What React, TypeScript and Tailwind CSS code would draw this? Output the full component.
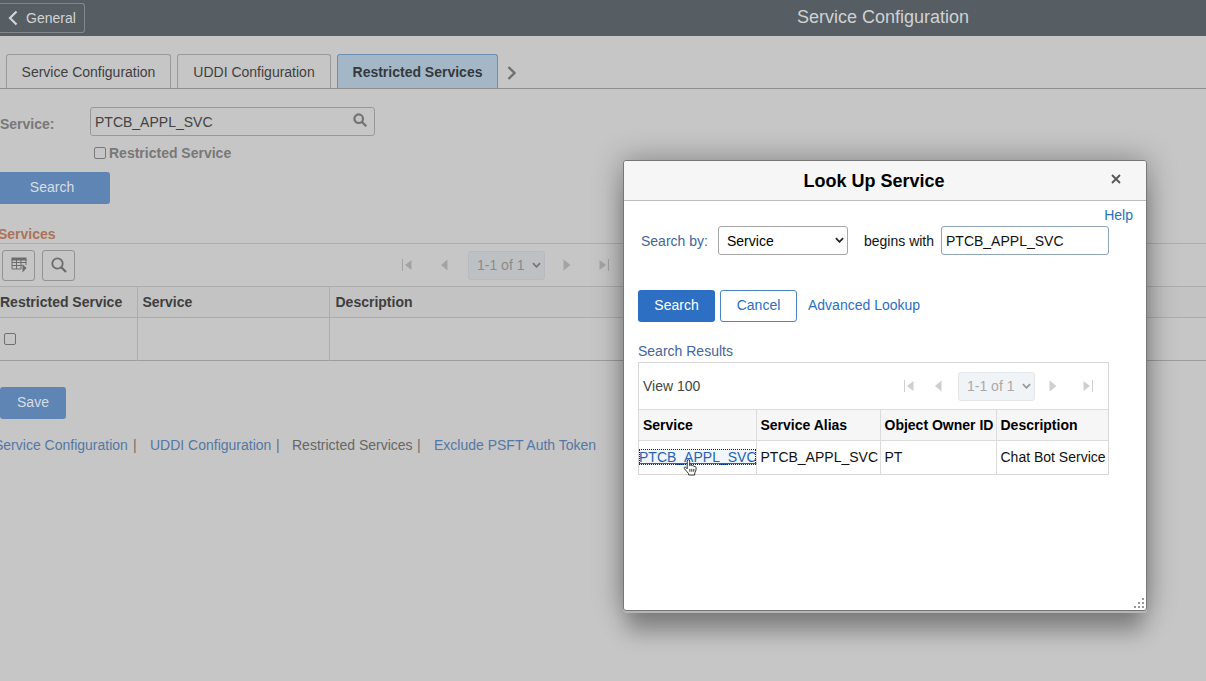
import React from "react";

type Tone = "dim" | "bright";

const Chevron = ({ className }: { className: string }) => (
  <svg viewBox="0 0 10 6" className={className} fill="none" stroke="currentColor" strokeWidth="2" aria-hidden="true">
    <path d="M1 1l4 4 4-4" />
  </svg>
);

function Pager({ tone, id }: { tone: Tone; id: string }) {
  const dim = tone === "dim";
  return (
    <div className={dim ? "flex items-center text-[#a3a3a3]" : "flex items-center text-[#cfcfcf]"}>
      <button type="button" aria-label="First page" className="flex">
        <svg viewBox="0 0 10 12" className="h-3 w-2.5" fill="currentColor">
          <path d="M0 0h1v12H0zM9.500 1v10L3 6z" />
        </svg>
      </button>
      <button type="button" aria-label="Previous page" className={dim ? "ml-7 flex" : "ml-5 flex"}>
        <svg viewBox="0 0 8 12" className="h-3 w-2" fill="currentColor">
          <path d="M7.500 .5v11L1 6z" />
        </svg>
      </button>
      <div className={dim ? "relative ml-5" : "relative ml-4"}>
        <select
          id={id}
          aria-label="Rows shown"
          className={
            dim
              ? "block h-[29px] w-[77px] appearance-none rounded-[3px] border border-[#b7bbbf] bg-[#bec1c3] pl-2 text-sm text-[#8b8b8b]"
              : "block h-[29px] w-[77px] appearance-none rounded-[3px] border border-[#e3e7ea] bg-[#f1f4f7] pl-2 text-sm text-[#a9a9a9]"
          }
        >
          <option>1-1 of 1</option>
        </select>
        <Chevron
          className={
            dim
              ? "pointer-events-none absolute top-[11px] right-1 h-[6px] w-[9px] text-[#777]"
              : "pointer-events-none absolute top-[11px] right-1 h-[6px] w-[9px] text-[#999]"
          }
        />
      </div>
      <button type="button" aria-label="Next page" className={dim ? "ml-[18px] flex" : "ml-[14px] flex"}>
        <svg viewBox="0 0 8 12" className="h-3 w-2" fill="currentColor">
          <path d="M.5 .5v11L7.500 6z" />
        </svg>
      </button>
      <button type="button" aria-label="Last page" className={dim ? "ml-7 flex" : "ml-[26px] flex"}>
        <svg viewBox="0 0 10 12" className="h-3 w-2.5" fill="currentColor">
          <path d="M9 0h1v12H9zM.5 1v10L7 6z" />
        </svg>
      </button>
    </div>
  );
}

function Page() {
  return (
    <div>
      <header className="relative flex h-9 items-start bg-[#565d63]">
        <button
          type="button"
          className="mt-[3px] flex h-[30px] w-[85px] items-center gap-2 rounded-r-[3px] border border-l-0 border-[#84888c] pl-2 text-sm text-[#d3d5d6]"
        >
          <svg viewBox="0 0 10 16" className="h-4 w-2.5" fill="none" stroke="currentColor" strokeWidth="2.200">
            <path d="M8.500 1.500L2 8l6.500 6.500" />
          </svg>
          General
        </button>
        <h1 className="absolute left-[797px] top-1 text-lg leading-[26px] text-[#d0d2d3]">Service Configuration</h1>
      </header>

      <nav className="flex h-[53px] items-end border-b border-[#8f8f8f] pl-1.5 text-sm text-[#3f3f3f]">
        <button type="button" className="h-[34px] w-[165px] rounded-t-[3px] border border-b-0 border-[#999]">
          Service Configuration
        </button>
        <button type="button" className="ml-1.5 h-[34px] w-[154px] rounded-t-[3px] border border-b-0 border-[#999]">
          UDDI Configuration
        </button>
        <button
          type="button"
          className="ml-1.5 h-[34px] w-[161px] rounded-t-[3px] border border-b-0 border-[#6c8fb5] bg-[#a4b7c6] font-bold text-[#35393c]"
        >
          Restricted Services
        </button>
        <button type="button" aria-label="More tabs" className="mb-2 ml-[9px] text-[#707070]">
          <svg viewBox="0 0 10 14" className="h-3.5 w-2.5" fill="none" stroke="currentColor" strokeWidth="2.400">
            <path d="M1.500 1l6 6-6 6" />
          </svg>
        </button>
      </nav>

      <main className="-ml-1.5 text-sm">
        <div className="flex pt-[18px] pl-1.5">
          <label htmlFor="service" className="w-[90px] pt-2 leading-[18px] font-bold text-[#787878]">
            Service:
          </label>
          <div className="relative">
            <input
              id="service"
              defaultValue="PTCB_APPL_SVC"
              className="block h-[29px] w-[285px] rounded-[3px] border border-[#989898] pl-1 text-[#424242] outline-none"
            />
            <svg
              viewBox="0 0 14 14"
              className="absolute top-1.5 right-2 h-3.5 w-3.5 text-[#737373]"
              fill="none"
              stroke="currentColor"
              strokeWidth="2.200"
            >
              <circle cx="5.700" cy="5.700" r="4.300" />
              <path d="M9 9l4.300 4.300" />
            </svg>
          </div>
        </div>
        <label className="flex items-center gap-[3px] pt-2 pl-[100px] leading-[18px] font-bold text-[#787878]">
          <input type="checkbox" className="h-3 w-3 appearance-none rounded-[2px] border border-[#787878]" />
          Restricted Service
        </label>
        <button type="button" className="mt-2.5 block h-8 w-[116px] rounded-[3px] bg-[#5f85b4] pb-0.5 text-[#d7dde4]">
          Search
        </button>

        <h2 className="mt-[22px] pl-1 leading-[17px] font-bold text-[#ad7358]">Services</h2>
        <div className="flex h-[43px] items-center border-t border-[#aeaeae] pl-2">
          <button
            type="button"
            aria-label="Grid actions"
            className="flex h-[31px] w-[33px] items-center justify-center rounded-[3px] border border-[#939393] text-[#6c6c6c]"
          >
            <svg viewBox="0 0 16 16" className="h-4 w-4" fill="none" stroke="currentColor">
              <path d="M.5 1.500h15M.5 2.500h15" strokeWidth="2" />
              <path d="M1 2v10h9M15 2v6M1 5.500h14M1 8.500h10M5.500 3v9M10 3v9" />
              <path d="M11.500 7v8.500L15.500 11z" fill="currentColor" stroke="none" />
            </svg>
          </button>
          <button
            type="button"
            aria-label="Find in grid"
            className="ml-[7px] flex h-[31px] w-[33px] items-center justify-center rounded-[3px] border border-[#939393] text-[#6c6c6c]"
          >
            <svg viewBox="0 0 16 16" className="h-4 w-4" fill="none" stroke="currentColor" strokeWidth="1.800">
              <circle cx="6.500" cy="6.500" r="5.200" />
              <path d="M10.300 10.300l4.700 4.700" strokeWidth="2.200" />
            </svg>
          </button>
          <div className="ml-[327px]">
            <Pager tone="dim" id="services-rows" />
          </div>
        </div>
        <table className="w-full table-fixed border-collapse text-left">
          <colgroup>
            <col className="w-[143px]" />
            <col className="w-[192px]" />
            <col />
          </colgroup>
          <thead>
            <tr className="h-[31px] border-y border-[#adadad] bg-[#c3c3c3] text-[#3e3e3e]">
              <th className="border-r border-[#adadad] pl-1.5 whitespace-nowrap">Restricted Service</th>
              <th className="border-r border-[#adadad] pl-[5px]">Service</th>
              <th className="pl-1.5">Description</th>
            </tr>
          </thead>
          <tbody>
            <tr className="h-[43px] border-b border-[#9d9d9d]">
              <td className="border-r border-[#adadad] pl-2.5">
                <input
                  type="checkbox"
                  aria-label="Restricted Service"
                  className="block h-3 w-3 appearance-none rounded-[2px] border border-[#707070]"
                />
              </td>
              <td className="border-r border-[#adadad]" />
              <td />
            </tr>
          </tbody>
        </table>
        <button type="button" className="mt-[26px] ml-1.5 block h-8 w-[66px] rounded-[3px] bg-[#5f85b4] pb-0.5 text-[#d7dde4]">
          Save
        </button>
        <div className="mt-[17px] flex leading-[18px] text-[#5577a5]">
          <a href="#service" className="w-[139px]">Service Configuration</a>
          <span className="w-[17px] text-[#6f6f6f]">|</span>
          <a href="#uddi" className="w-[126px]">UDDI Configuration</a>
          <span className="w-4 text-[#6f6f6f]">|</span>
          <span className="w-[125px] text-[#666]">Restricted Services</span>
          <span className="w-[17px] text-[#6f6f6f]">|</span>
          <a href="#exclude">Exclude PSFT Auth Token</a>
        </div>
      </main>
    </div>
  );
}

function LookUpDialog() {
  return (
    <section
      role="dialog"
      aria-labelledby="lookup-title"
      className="absolute top-40 right-[59px] flex min-h-[451px] w-[524px] flex-col rounded-[3px] border border-[#777] bg-white text-sm text-[#111] shadow-[0_2px_0_#b5b5b5,0_26px_20px_-4px_rgba(0,0,0,0.25),0_0_30px_rgba(0,0,0,0.35)]"
    >
      <header className="relative flex h-10 items-center justify-center rounded-t-[3px] border-b border-[#bdbdbd] bg-[#f6f6f6]">
        <h2 id="lookup-title" className="pr-[22px] text-lg font-bold text-black">
          Look Up Service
        </h2>
        <button type="button" aria-label="Close" className="absolute top-[13px] right-[25px] text-[#555]">
          <svg viewBox="0 0 10 10" className="h-2.5 w-2.5" fill="none" stroke="currentColor" strokeWidth="1.800">
            <path d="M1 1l8 8M9 1L1 9" />
          </svg>
        </button>
      </header>

      <div className="pr-[37px] pl-[14px]">
        <div className="-mr-6 flex justify-end pt-1 leading-[21px]">
          <a href="#help" className="text-[#2c70c2]">Help</a>
        </div>
        <div className="flex items-center">
          <label htmlFor="search-by" className="ml-[3px] w-[77px] text-[#44659c]">
            Search by:
          </label>
          <div className="relative">
            <select
              id="search-by"
              className="block h-[29px] w-[130px] appearance-none rounded-[3px] border border-[#a6a6a6] bg-white pl-2 text-black"
            >
              <option>Service</option>
            </select>
            <Chevron className="pointer-events-none absolute top-[11px] right-1 h-[6px] w-[9px] text-[#222]" />
          </div>
          <label htmlFor="lookup-value" className="ml-4 w-[77px] whitespace-nowrap">
            begins with
          </label>
          <input
            id="lookup-value"
            defaultValue="PTCB_APPL_SVC"
            className="h-[29px] w-[168px] rounded-[3px] border border-[#8fa3ba] pl-1 outline-none"
          />
        </div>

        <div className="mt-[35px] flex items-center">
          <button type="button" className="h-8 w-[77px] rounded-[3px] bg-[#2c6fc3] pb-0.5 text-white">
            Search
          </button>
          <button type="button" className="ml-[5px] h-8 w-[77px] rounded-[3px] border border-[#4a83c9] pb-0.5 text-[#2c6fc3]">
            Cancel
          </button>
          <a href="#advanced" className="ml-[11px] pb-0.5 text-[#2c6fc3]">
            Advanced Lookup
          </a>
        </div>

        <h3 className="mt-[19px] leading-[20px] text-[#44659c]">Search Results</h3>
        <div className="mt-px border border-[#d8d8d8]">
          <div className="flex h-[46px] items-center justify-between pr-[15px] pl-1">
            <a href="#view" className="text-[#444]">View 100</a>
            <Pager tone="bright" id="results-rows" />
          </div>
          <table className="w-full table-fixed border-collapse text-left whitespace-nowrap">
            <colgroup>
              <col className="w-[117px]" />
              <col className="w-[124px]" />
              <col className="w-[116px]" />
              <col />
            </colgroup>
            <thead>
              <tr className="h-[31px] border-y border-[#dcdcdc] bg-[#f6f6f6] text-black">
                <th className="border-r border-[#dcdcdc] pl-1">Service</th>
                <th className="border-r border-[#dcdcdc] pl-1">Service Alias</th>
                <th className="border-r border-[#dcdcdc] pl-1">Object Owner ID</th>
                <th className="pl-1">Description</th>
              </tr>
            </thead>
            <tbody>
              <tr className="h-[33px]">
                <td className="relative border-r border-[#dcdcdc]">
                  <a
                    href="#result"
                    className="block bg-[#eff6fc] leading-[16px] text-[#2c5fb0] underline outline-1 -outline-offset-1 outline-dotted outline-[#222]"
                  >
                    PTCB_APPL_SVC
                  </a>
                  <svg viewBox="0 0 16 18" className="pointer-events-none absolute top-[18px] left-[44px] h-[17px] w-[15px]" fill="#fff" stroke="#222">
                    <path d="M4.500 10.500V2.200c0-2 2.600-2 2.600 0V7c.6-1 2.200-.8 2.400.3.800-.7 2-.4 2.200.7 1-.5 2.300 0 2.300 1.500 0 3-1 4.500-1.500 5.500v2H6v-1.500C4.500 14 3 12 1.500 10.300c-1-1.400.7-2.500 1.800-1.300z" />
                    <path d="M7.300 10.500v3M9.400 10.500v3M11.500 10.500v3" />
                  </svg>
                </td>
                <td className="border-r border-[#dcdcdc] pl-1">PTCB_APPL_SVC</td>
                <td className="border-r border-[#dcdcdc] pl-1">PT</td>
                <td className="pl-1">Chat Bot Service</td>
              </tr>
            </tbody>
          </table>
        </div>
      </div>
      <svg viewBox="0 0 10 10" className="absolute right-0.5 bottom-0.5 h-2.5 w-2.5" fill="#999" aria-hidden="true">
        <path d="M8 0h2v2H8zM4 4h2v2H4zM8 4h2v2H8zM0 8h2v2H0zM4 8h2v2H4zM8 8h2v2H8z" />
      </svg>
    </section>
  );
}

export default function App() {
  return (
    <div className="relative min-h-screen overflow-hidden bg-[#c6c6c6] font-['Liberation_Sans',Arial,sans-serif]">
      <Page />
      <LookUpDialog />
    </div>
  );
}
